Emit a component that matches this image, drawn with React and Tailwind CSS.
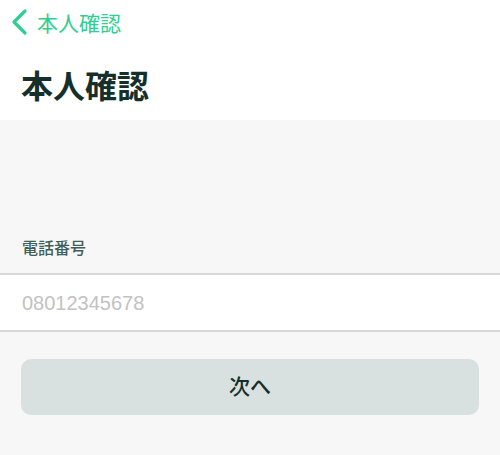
export default function App() {
  return (
    <div
      className="w-[500px] h-[455px] bg-[#f7f7f7] flex flex-col"
      style={{ fontFamily: '"Noto Sans CJK JP", "Liberation Sans", sans-serif' }}
    >
      {/* HEADER */}
      <div className="bg-white h-[120px] flex flex-col">
        <div className="h-[44px] flex items-center pl-[10px]">
          <svg width="20" height="28" viewBox="0 0 20 28" fill="none">
            <path
              d="M15 3 L4 14 L15 25"
              stroke="#2ecf90"
              strokeWidth="3.2"
              strokeLinecap="round"
              strokeLinejoin="round"
            />
          </svg>
          <span className="ml-[7px] text-[21px] leading-none text-[#2ecf90]">
            本人確認
          </span>
        </div>
        <h1 className="mt-[24px] pl-[21px] text-[32px] leading-none font-bold text-[#15302a]">
          本人確認
        </h1>
      </div>

      {/* FORM */}
      <div className="pt-[119px]">
        <p className="pl-[22px] text-[16px] leading-none font-medium text-[#3f5f58]">
          電話番号
        </p>
        <div className="mt-[18px] h-[59px] bg-white border-y-2 border-[#d8d8d8] flex items-center pl-[22px]">
          <span
            className="text-[20px] text-[#c2c2c2] leading-none"
            style={{ fontFamily: '"Liberation Sans", sans-serif' }}
          >
            08012345678
          </span>
        </div>
        <div className="px-[21px] mt-[27px]">
          <button className="w-full h-[56px] pb-[3px] rounded-[10px] bg-[#d9e1e0] flex items-center justify-center text-[21px] font-medium text-[#15302a]">
            次へ
          </button>
        </div>
      </div>
    </div>
  );
}
